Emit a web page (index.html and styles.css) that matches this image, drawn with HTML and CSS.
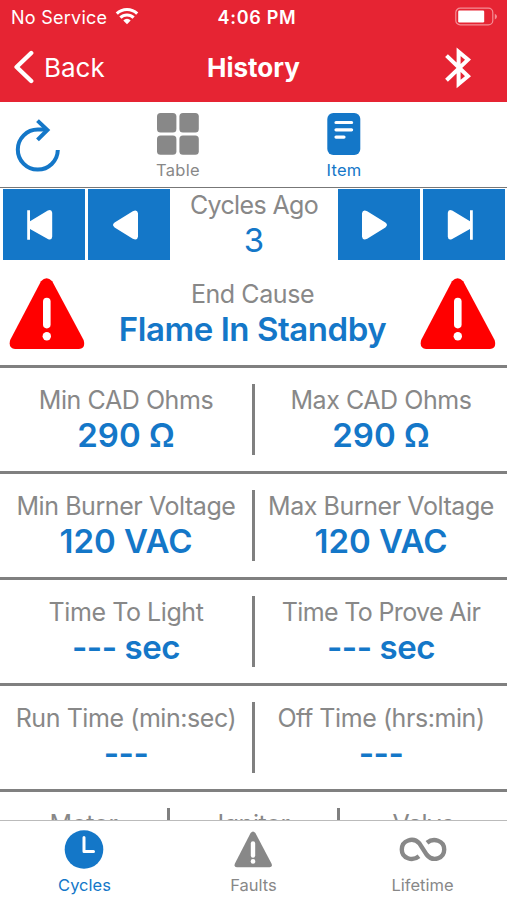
FILE: index.html
```html
<!DOCTYPE html>
<html lang="en">
<head>
<meta charset="utf-8">
<title>History</title>
<link rel="stylesheet" href="styles.css">
</head>
<body>
<div class="app">
  <header class="header">
    <div class="status">
      <div class="carrier"><span class="carrier-name">No Service</span>
        <svg class="wifi" width="24" height="18" viewBox="0 0 24 18" fill="none" stroke="#fff" stroke-width="3.1"><path d="M1.800 6.600a14.600 14.600 0 0 1 20.400 0"/><path d="M5.400 10.700a9.300 9.300 0 0 1 13.200 0"/><path d="M8.300 13.400a5.200 5.200 0 0 1 7.400 0L12 17.200z" fill="#fff" stroke="none"/></svg>
      </div>
      <div class="clock">4:06 PM</div>
      <svg class="battery" width="43" height="20" viewBox="0 0 43 20"><rect x=".8" y="1.2" width="37" height="16.6" rx="4.4" fill="none" stroke="#f48d95" stroke-width="1.2"/><rect x="3.2" y="3.5" width="26" height="12" rx="1.2" fill="#fff"/><path d="M39.8 6.7q2.2 1 2.2 2.9t-2.2 2.9z" fill="#f48d95"/></svg>
    </div>
    <div class="navbar">
      <div class="back"><svg width="22" height="34" viewBox="0 0 22 34" fill="none" stroke="#fff" stroke-width="4.400" stroke-linecap="round" stroke-linejoin="round"><path d="M18.200 3 3.600 17l14.600 14"/></svg><span>Back</span></div>
      <h1 class="title">History</h1>
      <svg class="bluetooth" width="28" height="42" viewBox="0 0 28 42" fill="none" stroke="#fff" stroke-width="4"><path d="M2.500 8.600 24 29.200 14.600 37V4.800L24 12.600 2.500 33.200"/></svg>
    </div>
  </header>

  <div class="toolbar">
    <svg class="refresh" width="50" height="58" viewBox="0 0 50 58" fill="none" stroke="#1477c8" stroke-width="4"><path d="M44.800 33a20 20 0 1 1-20-20.400H33.500"/><path d="M24.500 3.600 34.400 13 24.500 22.800"/></svg>
    <div class="view view-table">
      <svg width="42" height="42" viewBox="0 0 42 42" fill="#888"><rect width="19.400" height="19.400" rx="3.500"/><rect x="22.400" width="19.400" height="19.400" rx="3.500"/><rect y="22.400" width="19.400" height="19.400" rx="3.500"/><rect x="22.400" y="22.400" width="19.400" height="19.400" rx="3.500"/></svg>
      <span class="t-view">Table</span>
    </div>
    <div class="view view-item">
      <svg width="34" height="42" viewBox="0 0 34 42"><rect x=".3" width="33" height="42" rx="6" fill="#1477c8"/><path d="M9 9.500h15.600M9 16.800h15.600M9 24.100h8" stroke="#fff" stroke-width="3.200" stroke-linecap="round"/></svg>
      <span class="t-view">Item</span>
    </div>
  </div>

  <div class="pager">
    <button class="step" aria-label="First"><svg width="28" height="32" viewBox="0 0 28 32"><path d="M1.200 1.200h2.800v11L21.800 1.600q4-1.800 4.400 2.200v24q-.4 4-4.400 2.200L4 20v10.800H1.200z" fill="#fff"/></svg></button>
    <button class="step" aria-label="Previous"><svg width="28" height="32" viewBox="-1 0 28 32"><path d="M2.600 13.600 20.800 2.200q4.600-2 5.200 2v23.600q-.6 4-5.200 2L2.600 18.400q-3.200-2.400 0-4.800z" fill="#fff"/></svg></button>
    <div class="cell">
      <div class="label t-ago">Cycles Ago</div>
      <div class="value plain">3</div>
    </div>
    <button class="step" aria-label="Next"><svg width="28" height="32" viewBox="0 0 28 32"><path d="M24.400 13.600 6.200 2.200q-4.600-2-5.200 2v23.600q.6 4 5.200 2l18.200-11.400q3.200-2.400 0-4.800z" fill="#fff"/></svg></button>
    <button class="step" aria-label="Last"><svg width="28" height="32" viewBox="0 0 28 32"><path d="M26.800 1.200H24v11L6.200 1.600q-4-1.800-4.400 2.200v24q.4 4 4.400 2.200L24 20v10.800h2.800z" fill="#fff"/></svg></button>
  </div>

  <main class="content">
    <section class="cause">
      <svg width="76" height="72" viewBox="0 0 76 72"><path d="M32 3.200q5.600-6 11.200 0L74.600 62q2.400 8-4.600 9H6q-7-1-4.800-9z" fill="red"/><path d="M37.800 23.600v23" stroke="#fff" stroke-width="7.600" stroke-linecap="round"/><circle cx="37.800" cy="58.200" r="4.200" fill="#fff"/></svg>
      <div class="cell"><div class="label t-end">End Cause</div><div class="value tight">Flame In Standby</div></div>
      <svg width="76" height="72" viewBox="0 0 76 72"><path d="M32 3.200q5.600-6 11.200 0L74.600 62q2.400 8-4.600 9H6q-7-1-4.800-9z" fill="red"/><path d="M37.800 23.600v23" stroke="#fff" stroke-width="7.600" stroke-linecap="round"/><circle cx="37.800" cy="58.200" r="4.200" fill="#fff"/></svg>
    </section>
    <section class="row">
      <div class="cell"><div class="label">Min CAD Ohms</div><div class="value">290 Ω</div></div>
      <div class="cell"><div class="label">Max CAD Ohms</div><div class="value">290 Ω</div></div>
    </section>
    <section class="row">
      <div class="cell"><div class="label">Min Burner Voltage</div><div class="value">120 VAC</div></div>
      <div class="cell"><div class="label">Max Burner Voltage</div><div class="value">120 VAC</div></div>
    </section>
    <section class="row">
      <div class="cell"><div class="label">Time To Light</div><div class="value tight">--- sec</div></div>
      <div class="cell"><div class="label t-prove">Time To Prove Air</div><div class="value tight">--- sec</div></div>
    </section>
    <section class="row">
      <div class="cell"><div class="label">Run Time (min:sec)</div><div class="value tight">---</div></div>
      <div class="cell"><div class="label">Off Time (hrs:min)</div><div class="value tight">---</div></div>
    </section>
    <section class="row">
      <div class="cell"><div class="label">Motor</div></div>
      <div class="cell"><div class="label">Ignitor</div></div>
      <div class="cell"><div class="label">Valve</div></div>
    </section>
  </main>

  <nav class="tabs">
    <div class="tab active">
      <svg class="clock-icon" width="40" height="40" viewBox="0 0 40 40"><circle cx="20" cy="20.500" r="19.300" fill="#1477c8"/><path d="M20 8.500v14h9.500" fill="none" stroke="#fff" stroke-width="3" stroke-linecap="round" stroke-linejoin="round"/></svg>
      <span>Cycles</span>
    </div>
    <div class="tab">
      <svg width="40" height="40" viewBox="0 0 40 40"><path d="M16.600 4q2.400-3 4.800 0L37.600 34.800q1 3.200-2 3.400H2.800q-3-.2-2-3.400z" fill="#888"/><path d="M19 14.500v12" stroke="#fff" stroke-width="4.400" stroke-linecap="round"/><circle cx="19" cy="32.400" r="2.300" fill="#fff"/></svg>
      <span>Faults</span>
    </div>
    <div class="tab">
      <svg width="48" height="40" viewBox="0 0 48 40" fill="none" stroke="#888" stroke-width="4.400"><path d="M20 27.200C13.500 32.500 2.800 29.500 2.800 20.500S14 7.500 20.500 14.500L27.500 25.500C34 33.500 45.200 29.500 45.200 20.500S34.500 8.500 28 13.800"/></svg>
      <span>Lifetime</span>
    </div>
  </nav>
</div>
</body>
</html>
```
FILE: styles.css
```css
* { box-sizing: border-box; }
body { margin: 0; background: #fff; font-family: Inter, "Liberation Sans", sans-serif; color: #888; }
svg { display: block; flex: none; }
.app { width: 507px; height: 900px; display: flex; flex-direction: column; overflow: hidden; }

.header { height: 102px; background: #e62433; color: #fff; flex: none; }
.status { height: 34px; display: grid; grid-template-columns: 1fr auto 1fr; align-items: center; padding: 0 9px 0 11px; font-size: 18px; }
.carrier { display: flex; align-items: center; gap: 8px; white-space: nowrap; }
.carrier-name { letter-spacing: 0.25px; }
.wifi { margin-top: -2px; }
.clock { font-weight: 600; letter-spacing: 0.7px; padding-left: 5px; }
.battery { justify-self: end; }
.navbar { height: 68px; display: grid; grid-template-columns: 1fr auto 1fr; align-items: center; padding: 0 13px; font-size: 26px; }
.back { display: flex; align-items: center; gap: 9px; margin-top: -2px; }
.title { margin: -2px 0 0; font-size: 26px; font-weight: 700; }
.bluetooth { justify-self: end; margin-right: 22px; }

.toolbar { height: 86px; flex: none; display: flex; border-bottom: 1px solid #777; font-size: 16.5px; padding-left: 13px; }
.refresh { margin-top: 15px; }
.view { display: flex; flex-direction: column; align-items: center; padding-top: 11px; width: 60px; line-height: 20px; gap: 5px; }
.view-table { margin-left: 85px; }
.view-item { margin-left: 106px; color: #1477c8; }
.t-view { letter-spacing: 0.3px; }

.pager { height: 72px; flex: none; display: flex; gap: 3px; padding: 1px 2px 0 3px; }
.step { width: 82px; height: 71px; margin: 0; padding: 1px 8px 0 0; border: 0; background: #1477c8; display: flex; align-items: center; justify-content: center; }

.content { flex: 1; min-height: 0; overflow: hidden; }
.cell { flex: 1; min-width: 0; padding-top: 1px; text-align: center; white-space: nowrap; }
.label { font-size: 25px; line-height: 30px; letter-spacing: -0.43px; }
.t-ago, .t-prove { letter-spacing: -0.65px; }
.value { font-size: 33px; line-height: 41px; font-weight: 600; color: #1477c8; }
.tight { letter-spacing: -0.45px; }
.plain { font-weight: 400; }
.cause { height: 108px; display: flex; padding: 18px 11px 0 9px; border-bottom: 3px solid #808080; }
.row { height: 106px; display: flex; padding: 16px 0; border-bottom: 3px solid #808080; }
.row .cell + .cell { border-left: 3px solid #808080; }

.tabs { height: 80px; flex: none; display: flex; border-top: 1px solid #bbb; font-size: 16.5px; }
.tab { flex: 1; display: flex; flex-direction: column; align-items: center; padding-top: 8px; gap: 6px; line-height: 20px; }
.clock-icon { margin-right: 2px; }
.active { color: #1477c8; }
```
